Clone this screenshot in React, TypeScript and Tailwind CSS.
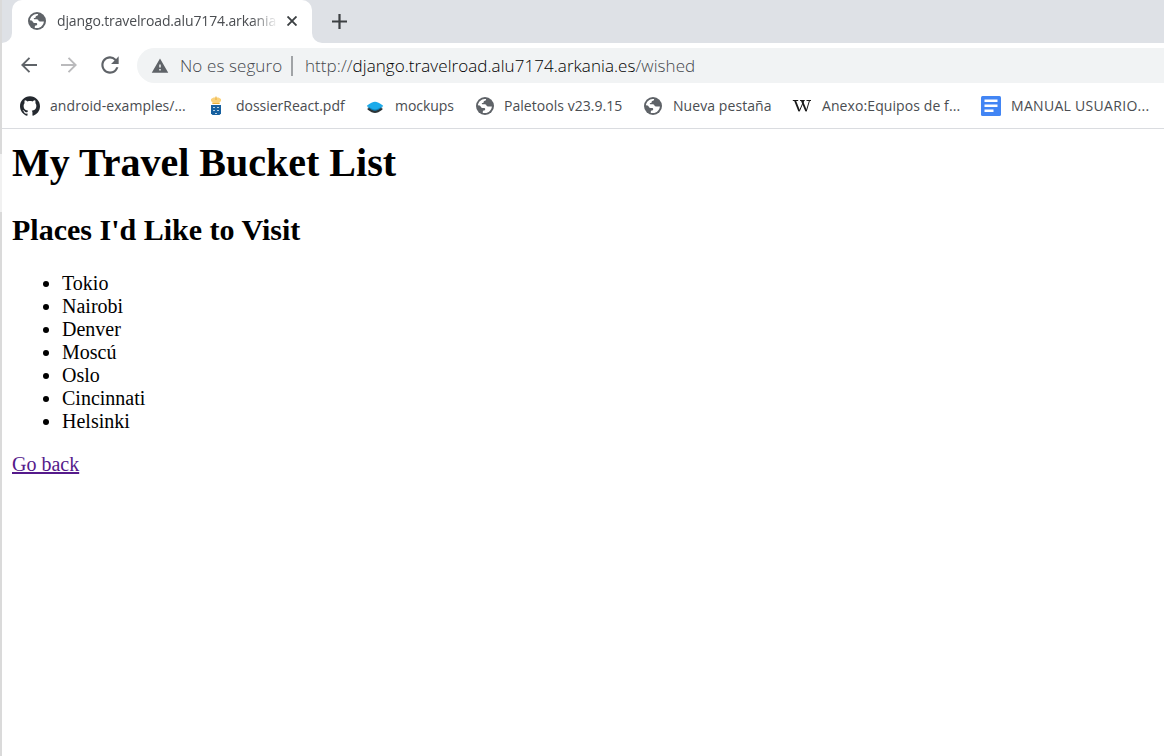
import React from "react";
import { SiGithub } from "react-icons/si";
import { MdRefresh, MdWarning } from "react-icons/md";

const ui = "font-['Open_Sans','Noto_Sans',sans-serif]";

function Globe() {
  return (
    <svg viewBox="0 0 18 18" className="size-[18px] shrink-0">
      <circle cx="9" cy="9" r="9" fill="#5f6368" />
      <path
        fill="#fff"
        d="M1.900 8.200C2.300 4.800 5.200 2 8.600 1.900h1.500c0 1-.3 1.700-1.200 1.800-1 .1-1.200.5-1.200 1.400 0 .8-.6 1-1.400 1-.7 0-.6.9-.1 1.200h2.700c1.200 0 1.500.9 1.700 1.500.2.700.9.6 1.800.6h3.500c-.3 3.500-3 6.500-6.900 6.700H6.800v-1.500c0-.7.5-1 1.300-1.100 1-.1 1.100-.7 1.100-1.400 0-.9-.4-1.200-1.300-1.200H6.500C5 10.900 4.800 8.800 3.600 8.400z"
      />
    </svg>
  );
}

function Crest() {
  return (
    <svg viewBox="0 0 12 20" className="h-5 w-3 shrink-0">
      <path fill="#fbd27c" d="M1 3 3.500 1.500h5L11 3v2L9.500 6.500V8h-7V6.500L1 5z" />
      <path fill="#eaaf3c" d="M2.500 7h7v1h-7zM5.500.5h1V4h-1z" />
      <path fill="#17609f" d="M1 9h10v8.500L9.500 19h-7L1 17.500z" />
      <path fill="#b9d0e2" d="M3 11h2v1H3zM7 11h2v1H7zM3 14h2v1H3zM7 14h2v1H7zM5 17h2v1H5z" />
    </svg>
  );
}

function Layers() {
  return (
    <svg viewBox="0 0 18 12" className="mt-[3px] ml-px h-3 w-[18px] shrink-0">
      <path fill="#2b3336" d="M1.500 7.500 9 5l7.500 2.500v1Q12 12 9 12T1.500 8.500z" />
      <path fill="#0f7fb5" d="M.8 5.500h16.400Q12 9.700 9 9.700T.8 5.500z" />
      <path fill="#1cabea" d="M.8 4.800Q6 .8 9 .8t8.200 4Q12 8.500 9 8.500T.8 4.800z" />
    </svg>
  );
}

function Doc() {
  return (
    <svg viewBox="0 0 20 20" className="size-5 shrink-0">
      <rect width="20" height="20" rx="1.500" fill="#4285f4" />
      <path fill="#fff" d="M3.500 3.500h13V6h-13zM3.500 8.500h13V11h-13zM3.500 13.500h9V16h-9z" />
    </svg>
  );
}

function Wiki() {
  return (
    <svg viewBox="0 0 20 14" className="h-[14px] w-5 shrink-0" fill="none" stroke="#1a1a1a">
      <path strokeWidth="1" d="M.8 1.500h5.400M8 1.500h4.700M14.500 1.500h4.500" />
      <path strokeWidth="1.900" d="M3 1.500 7.200 12M9.800 1.500 14.200 12" />
      <path strokeWidth="1" d="M7.200 12.500 12 1.500M14.200 12.500 17.500 1.500" />
    </svg>
  );
}

const bookmarks = [
  { icon: <SiGithub className="size-5 text-[#24292f]" />, label: "android-examples/...", box: "w-[186px]", iconBox: "w-[30px]", text: "tracking-[0.07px]" },
  { icon: <Crest />, label: "dossierReact.pdf", box: "w-[159px]", iconBox: "w-[30px] pl-1", text: "tracking-[-0.02px]" },
  { icon: <Layers />, label: "mockups", box: "w-[111px]", iconBox: "w-[30px]", text: "tracking-[-0.05px]" },
  { icon: <Globe />, label: "Paletools v23.9.15", box: "w-[168px]", iconBox: "w-[28px]", text: "tracking-[0.04px]" },
  { icon: <Globe />, label: "Nueva pestaña", box: "w-[148px]", iconBox: "w-[29px]", text: "tracking-[0.07px]" },
  { icon: <Wiki />, label: "Anexo:Equipos de f...", box: "w-[189px]", iconBox: "w-[30px]", text: "tracking-[0.09px]" },
  { icon: <Doc />, label: "MANUAL USUARIO...", box: "w-[180px]", iconBox: "w-[30px]", text: "tracking-[0.3px]" },
];

const places = ["Tokio", "Nairobi", "Denver", "Moscú", "Oslo", "Cincinnati", "Helsinki"];

export default function App() {
  return (
    <div className="flex h-[756px] w-[1164px] overflow-hidden bg-white">
      <div className="flex w-0.5 shrink-0 flex-col bg-[#dadada]">
        <div className="mt-[154px] h-[58px] bg-[#f1f1f1]" />
      </div>
      <div className="flex min-w-0 flex-1 flex-col">
        <header className={`shrink-0 ${ui}`}>
          <div className="flex h-[43px] bg-[#dee1e6]">
            <div className="w-[10px] bg-white">
              <div className="h-full rounded-br-[10px] bg-[#dee1e6]" />
            </div>
            <div className="flex h-full w-[300px] items-center rounded-t-[10px] bg-white pl-4">
              <div className="mb-px">
                <Globe />
              </div>
              <span className="mb-0.5 ml-[11px] w-[219px] whitespace-nowrap text-[14px] tracking-[-0.13px] text-[#4a4d51] [mask-image:linear-gradient(to_right,black_195px,transparent_221px)]">
                django.travelroad.alu7174.arkania
              </span>
              <svg viewBox="0 0 10 10" className="mb-px ml-[11px] size-[10px]" stroke="#3c4043" strokeWidth="1.900">
                <path d="M.5.5l9 9M9.500.5l-9 9" />
              </svg>
            </div>
            <div className="flex-1 bg-white">
              <div className="flex h-full items-center rounded-bl-[10px] bg-[#dee1e6] pl-5">
                <svg viewBox="0 0 15 15" className="size-[15px]" stroke="#3c4043" strokeWidth="2.200">
                  <path d="M7.500 0v15M0 7.500h15" />
                </svg>
              </div>
            </div>
          </div>
          <div className="flex h-[45px] items-center">
            <svg viewBox="0 0 16 16" className="mb-0.5 ml-[19px] size-4" fill="none" stroke="#5f6368" strokeWidth="1.900">
              <path d="M16 8H1.500M8.500.8 1.300 8l7.200 7.200" />
            </svg>
            <svg viewBox="0 0 16 16" className="mb-0.5 ml-6 size-4" fill="none" stroke="#bababc" strokeWidth="1.900">
              <path d="M0 8h14.500M7.500.8 14.700 8l-7.200 7.200" />
            </svg>
            <MdRefresh className="mb-0.5 ml-5 size-[26px] text-[#5f6368]" />
            <div className="ml-[14px] flex h-[35px] flex-1 items-center rounded-l-full bg-[#f1f3f4] pl-[14px] text-[17px] font-light whitespace-nowrap text-[#45484d]">
              <MdWarning className="size-[18px] text-[#5f6368]" />
              <span className="ml-[11px] w-[111px] tracking-[0.1px]">No es seguro</span>
              <div className="h-5 w-0.5 bg-[#a0a3a6]" />
              <span className="ml-3 tracking-[0.06px]">
                http://<span className="text-black">django.travelroad.alu7174.arkania.es</span>/wished
              </span>
            </div>
          </div>
          <nav className="flex h-[41px] items-center border-b border-[#dadce0] pb-[5px] pl-[18px] text-[14px] whitespace-nowrap text-[#4a4d51]">
            {bookmarks.map((b) => (
              <div key={b.label} className={`flex shrink-0 items-center ${b.box}`}>
                <div className={`flex shrink-0 items-center ${b.iconBox}`}>{b.icon}</div>
                <span className={b.text}>{b.label}</span>
              </div>
            ))}
          </nav>
        </header>
        <main className="px-[10px] pt-[11px] font-['Liberation_Serif',serif] text-[20px] leading-[23px] text-black">
          <h1 className="text-[40px] leading-[46px] font-bold">My Travel Bucket List</h1>
          <h2 className="mt-[27px] text-[30px] leading-[34px] font-bold">Places I'd Like to Visit</h2>
          <ul className="mt-[25px] list-disc pl-[50px]">
            {places.map((p) => (
              <li key={p}>{p}</li>
            ))}
          </ul>
          <a href="#" className="mt-5 inline-block text-[#551a8b] underline">Go back</a>
        </main>
      </div>
    </div>
  );
}
